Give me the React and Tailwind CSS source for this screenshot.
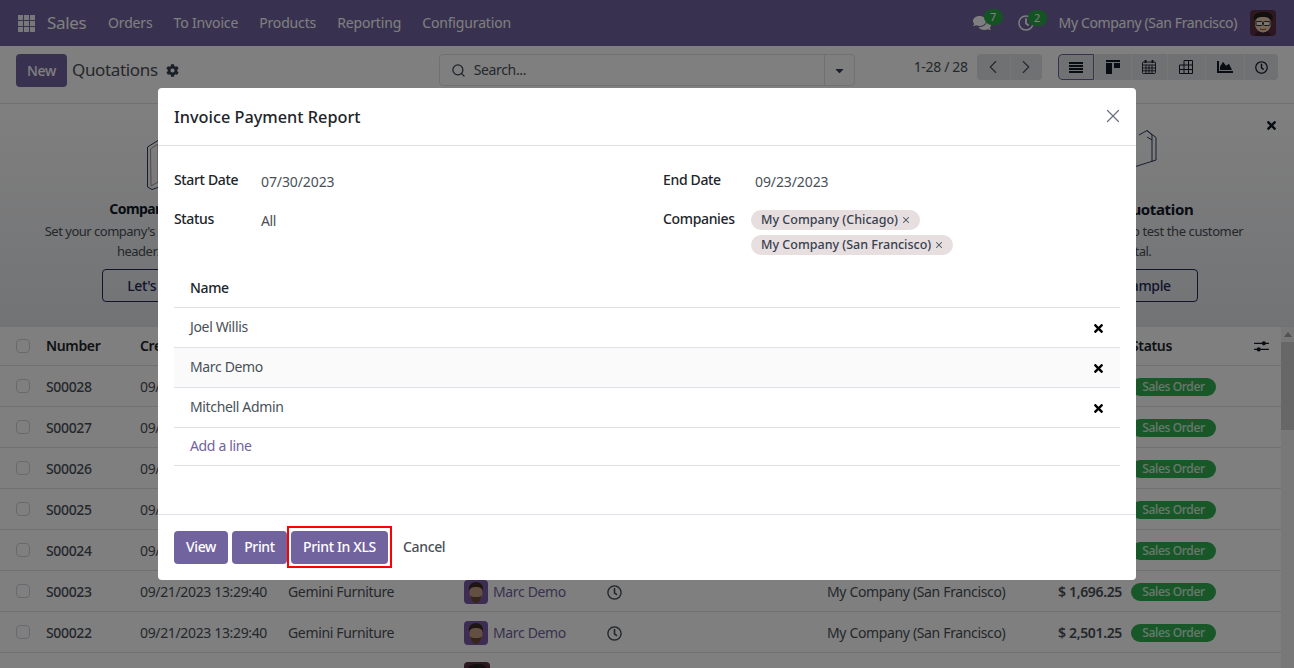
import { ChevronLeft, ChevronRight, Search, X } from 'lucide-react';
import { FaCaretDown, FaChartArea, FaCog, FaComments, FaRegClock, FaTimes } from 'react-icons/fa';

const menus = ['Orders', 'To Invoice', 'Products', 'Reporting', 'Configuration'];

const orders = [
  { id: 'S00028', date: '09/', customer: '', person: '' },
  { id: 'S00027', date: '09/', customer: '', person: '' },
  { id: 'S00026', date: '09/', customer: '', person: '' },
  { id: 'S00025', date: '09/', customer: '', person: '' },
  { id: 'S00024', date: '09/', customer: '', person: '' },
  { id: 'S00023', date: '09/21/2023 13:29:40', customer: 'Gemini Furniture', person: 'Marc Demo', company: 'My Company (San Francisco)', total: '$ 1,696.25' },
  { id: 'S00022', date: '09/21/2023 13:29:40', customer: 'Gemini Furniture', person: 'Marc Demo', company: 'My Company (San Francisco)', total: '$ 2,501.25' },
];

const lines = ['Joel Willis', 'Marc Demo', 'Mitchell Admin'];

const MarcAvatar = () => (
  <svg viewBox="0 0 24 24" className="w-6 h-6 rounded">
    <rect width="24" height="24" fill="#7a5aa6" />
    <ellipse cx="12" cy="13" rx="6.5" ry="9" fill="#c9a184" />
    <path d="M5 11c-1-6 3-9 7-9s8 3 7 9c-1-3-3-4-7-4s-6 1-7 4z" fill="#3a2a22" />
    <path d="M6 15c1 6 4 8 6 8s5-2 6-8c-1 2-3 2-6 2s-5 0-6-2z" fill="#6b4a38" />
  </svg>
);

const MitchellAvatar = () => (
  <svg viewBox="0 0 26 26" className="w-[26px] h-[26px] rounded">
    <rect width="26" height="26" fill="#5a2f42" />
    <path d="M5 26c0-4 4-5 8-5s8 1 8 5z" fill="#3a2030" />
    <ellipse cx="13" cy="14" rx="8" ry="8.500" fill="#efcfae" />
    <path d="M4 11C2 4 8 2 13 2s12 1 9 9c-2-3-4-4-9-4s-7 1-9 4z" fill="#23201f" />
    <rect x="6" y="11.500" width="6.500" height="4" rx="1" fill="#f5efe6" stroke="#333" />
    <rect x="13.500" y="11.500" width="6.500" height="4" rx="1" fill="#f5efe6" stroke="#333" />
    <path d="M10 19q3 1.500 6 0" fill="none" stroke="#8a4a3a" />
  </svg>
);

const ViewButton = ({ children, active, width }) => (
  <div className={`h-[26px] flex items-center justify-center bg-[#dfe2e5] ${width} ${active ? 'border border-[#71639e] rounded-l' : 'border-l border-[#eceef0]'}`}>
    {children}
  </div>
);

const Tag = ({ label }) => (
  <span className="inline-flex items-center h-5 pl-[10px] pr-[9px] rounded-full bg-[#e7dfdf] text-[12.5px] font-medium tracking-normal text-[#374151] w-fit">
    {label}
    <X size={10} strokeWidth={2.5} className="ml-[3px] text-[#4b5563]" />
  </span>
);

const Checkbox = () => (
  <span className="ml-4 w-[14px] h-[14px] border border-[#ced4da] rounded-sm" />
);

export default function App() {
  return (
    <div className="relative h-screen overflow-hidden bg-white text-sm tracking-[-0.35px] text-[#495057] font-['Noto_Sans',sans-serif]">
      {/* Navbar */}
      <div className="h-[46px] bg-[#71639e] flex items-center text-white">
        <div className="grid grid-cols-3 gap-[1px] ml-[18px] w-[17px]">
          {Array.from({ length: 9 }).map((_, i) => (
            <span key={i} className="h-[5px] bg-white/90" />
          ))}
        </div>
        <span className="ml-3 text-[17px] w-[61px]">Sales</span>
        <div className="flex tracking-[-0.15px]">
          {menus.map((m) => (
            <span key={m} className="mr-[21px]">{m}</span>
          ))}
        </div>
        <div className="ml-auto flex items-center">
          <div className="relative mr-[27px]">
            <FaComments size={18} />
            <span className="absolute -top-[5px] left-[11px] w-[19px] h-4 rounded-full bg-[#28a745] text-[11px] leading-4 text-center">7</span>
          </div>
          <div className="relative mr-[25px]">
            <FaRegClock size={16} />
            <span className="absolute -top-[5px] left-[10px] w-[19px] h-4 rounded-full bg-[#28a745] text-[11px] leading-4 text-center">2</span>
          </div>
          <span className="mr-[13px]">My Company (San Francisco)</span>
          <div className="mr-[18px] flex"><MitchellAvatar /></div>
        </div>
      </div>

      {/* Control panel */}
      <div className="h-[58px] border-b border-[#dee2e6] flex items-start pt-2 pl-4">
        <button className="h-[33px] w-[51px] rounded bg-[#71639e] text-white font-medium">New</button>
        <span className="ml-[5px] mt-[3px] text-[17px] leading-[26px]">Quotations</span>
        <FaCog size={13} className="ml-2 mt-[10px] text-[#374151]" />
        <div className="ml-[260px] w-[416px] h-8 border border-[#dee2e6] rounded flex items-center">
          <Search size={15} className="ml-[11px] text-[#374151]" />
          <span className="ml-[8px] flex-1">Search...</span>
          <div className="w-[30px] h-full border-l border-[#dee2e6] flex items-center justify-center">
            <FaCaretDown size={13} className="text-[#374151]" />
          </div>
        </div>
        <span className="ml-[59px] mt-[3px] w-[63px] whitespace-nowrap">1-28 / 28</span>
        <div className="flex rounded overflow-hidden">
          <div className="w-[33px] h-[26px] bg-[#dfe2e5] flex items-center justify-center"><ChevronLeft size={22} strokeWidth={1.2} /></div>
          <div className="w-[32px] h-[26px] bg-[#dfe2e5] border-l border-[#eceef0] flex items-center justify-center"><ChevronRight size={22} strokeWidth={1.2} /></div>
        </div>
        <div className="ml-4 flex rounded overflow-hidden text-[#111827]">
          <ViewButton active width="w-9">
            <span className="flex flex-col gap-[1px] w-[14px]">
              <i className="h-[2px] bg-[#111827]" /><i className="h-[2px] bg-[#111827]" /><i className="h-[2px] bg-[#111827]" /><i className="h-[2px] bg-[#111827]" />
            </span>
          </ViewButton>
          <ViewButton width="w-[37px]">
            <svg viewBox="0 0 14 14" className="w-[14px] h-[14px]" fill="#111827"><path d="M0 0h14v2H0zM0 3h6v11H0zM8 3h6v5H8z" /></svg>
          </ViewButton>
          <ViewButton width="w-9">
            <svg viewBox="0 0 14 14" className="w-[14px] h-[14px]" fill="none" stroke="#111827" strokeWidth="0.9">
              <rect x="0.500" y="2" width="13" height="11.500" rx="1" />
              <path d="M0.500 5h13M0.500 8h13M0.500 10.800h13M4 5v8.500M7 5v8.500M10 5v8.500" />
              <path d="M3.500 0v3M10.500 0v3" strokeWidth="1.800" />
            </svg>
          </ViewButton>
          <ViewButton width="w-[38px]">
            <svg viewBox="0 0 14 14" className="w-[14px] h-[14px]" fill="none" stroke="#111827"><path d="M5 .5h8.500v13H.5V5h13M5 .5v13M9.500.5v13M.5 9.500h13" /></svg>
          </ViewButton>
          <ViewButton width="w-[39px]"><FaChartArea size={16} /></ViewButton>
          <ViewButton width="w-[34px]"><FaRegClock size={13} /></ViewButton>
        </div>
      </div>

      {/* Onboarding banner */}
      <div className="relative h-[223px] bg-gradient-to-b from-white to-[#e5e7eb] border-b border-[#dee2e6] flex justify-between px-[17px] pt-[25px]">
        <div className="w-[280px] flex flex-col items-center text-center">
          <div className="h-[70px] pt-[11px] ml-[40px]">
            <svg viewBox="0 0 60 50" className="w-[60px] h-[50px]" fill="none">
              <path d="M11 .5.5 7v40L5 49.500 60 30" stroke="#2f3a63" />
              <path d="M3.500 9 11 4v38l-7 4z" stroke="#a58f98" />
            </svg>
          </div>
          <div className="font-bold leading-5 tracking-[-0.6px] text-[#111827]">Company Data</div>
          <div className="mt-[2px] text-[13px] leading-5 tracking-[-0.5px] whitespace-nowrap">Set your company's data for documents</div>
          <div className="text-[13px] leading-5 tracking-[-0.5px]">header/footer.</div>
          <button className="mt-2 ml-[5px] pr-1 w-[115px] h-[33px] border border-[#1f2a5a] rounded text-[#1f2a5a] font-medium">Let's do it</button>
        </div>
        <div className="w-[280px] flex flex-col items-center text-center">
          <div className="h-[70px] pt-[1px]">
            <svg viewBox="0 0 40 48" className="w-10 h-12" fill="none" stroke="#2f3a63">
              <path d="M0 38h14l25-8V7.500L30 .5 22 5" />
              <path d="M30 .5 35 5v27M30 7l5 3" />
            </svg>
          </div>
          <div className="mr-[17px] text-[15px] font-bold leading-5 text-[#111827]">Sample Quotation</div>
          <div className="mt-[2px] mr-[4px] text-[13px] leading-5 tracking-[-0.4px] whitespace-nowrap">Send a quotation to test the customer</div>
          <div className="mr-[8px] text-[13px] leading-5 tracking-[-0.5px]">portal.</div>
          <button className="mt-2 mr-[14px] w-[135px] h-[33px] border border-[#1f2a5a] rounded text-[#1f2a5a] font-medium">Send sample</button>
        </div>
        <FaTimes size={13} className="absolute top-[15px] right-4 text-[#111827]" />
      </div>

      {/* List */}
      <div className="flex">
        <div className="w-[1281px]">
          <div className="h-[39px] border-b border-[#dee2e6] grid grid-cols-[46px_94px_148px_176px_143px_220px_180px_124px_150px] items-center font-semibold text-[#212529]">
            <Checkbox />
            <span>Number</span>
            <span>Creation Date</span>
            <span />
            <span />
            <span />
            <span />
            <span />
            <div className="flex items-center justify-between pr-[12px]">
              <span>Status</span>
              <svg viewBox="0 0 16 14" className="w-[15px] h-[13px]" fill="#111827"><path d="M0 3h16v1.300H0zM0 9.500h16v1.300H0z" /><circle cx="10.500" cy="3.600" r="2.200" /><circle cx="5" cy="10.100" r="2.200" /></svg>
            </div>
          </div>
          {orders.map((o) => (
            <div key={o.id} className="h-[41px] pt-[2px] border-b border-[#dee2e6] grid grid-cols-[46px_94px_148px_176px_143px_220px_180px_124px_150px] items-center whitespace-nowrap">
              <span className="-mt-[2px] ml-4 w-[14px] h-[14px] border border-[#ced4da] rounded-sm" />
              <span className="font-medium">{o.id}</span>
              <span>{o.date}</span>
              <span>{o.customer}</span>
              <span className="-mt-[1px] flex items-center gap-[5px] text-[#71639e]">
                {o.person && <MarcAvatar />}
                {o.person}
              </span>
              <span>{o.person && <FaRegClock size={15} />}</span>
              <span>{o.company}</span>
              <span className="text-right pr-[9px] font-semibold col-start-8">{o.total}</span>
              <span className="w-[85px] h-[18px] rounded-full bg-[#30b050] text-white/80 text-xs font-medium leading-[18px] text-center">Sales Order</span>
            </div>
          ))}
          <div className="h-[41px] grid grid-cols-[46px_94px_148px_176px_143px] items-center pt-[2px] whitespace-nowrap">
            <Checkbox />
            <span className="font-medium">S00021</span>
            <span>09/21/2023 13:29:40</span>
            <span>Gemini Furniture</span>
            <span className="flex items-center gap-[5px] text-[#71639e]"><MitchellAvatar />Mitchell Admin</span>
          </div>
        </div>
        <div className="w-[13px] h-[341px] bg-[#f1f1f1] flex flex-col items-center pt-[5px]">
          <span className="w-0 h-0 border-x-[4px] border-x-transparent border-b-[5px] border-b-[#a3a3a3]" />
          <span className="mt-[5px] w-full h-[88px] bg-[#cfcfcf]" />
        </div>
      </div>

      {/* Dialog */}
      <div className="absolute inset-0 bg-black/50 flex justify-center items-start pt-[88px]">
        <div className="w-[978px] h-[492px] bg-white rounded-sm flex flex-col">
          <div className="h-[58px] shrink-0 border-b border-[#dee2e6] px-4 flex items-center justify-between">
            <h4 className="pt-[2px] text-[16.3px] font-medium tracking-normal text-[#212529]">Invoice Payment Report</h4>
            <X size={22} strokeWidth={1.3} className="text-[#6b7280] mr-[-4px] -mt-[1px]" />
          </div>

          <div className="flex-1 px-4 pt-6">
            <div className="grid grid-cols-[489px_1fr]">
              <div className="grid grid-cols-[87px_1fr] grid-rows-[39px_auto]">
                <span className="font-medium text-[#212529]">Start Date</span>
                <span className="pt-[2px] tracking-[-0.1px]">07/30/2023</span>
                <span className="font-medium text-[#212529]">Status</span>
                <span className="pt-[2px]">All</span>
              </div>
              <div className="grid grid-cols-[88px_1fr] grid-rows-[39px_auto]">
                <span className="font-medium text-[#212529]">End Date</span>
                <span className="pt-[2px] pl-1 tracking-[-0.1px]">09/23/2023</span>
                <span className="font-medium text-[#212529]">Companies</span>
                <div className="flex flex-col gap-[5px] pt-[1px]">
                  <Tag label="My Company (Chicago)" />
                  <Tag label="My Company (San Francisco)" />
                </div>
              </div>
            </div>

            <div className="mt-[15px] w-[946px]">
              <div className="h-[38px] pb-[1px] border-b border-[#dee2e6] pl-4 flex items-center font-medium text-[#212529]">Name</div>
              {lines.map((name, i) => (
                <div key={name} className={`h-10 border-b border-[#dee2e6] pl-4 pr-4 flex items-center justify-between ${i === 1 ? 'bg-[#fafafa]' : ''}`}>
                  <span className="-mt-[1px]">{name}</span>
                  <FaTimes size={13} className="text-black mt-[2px] -mr-[1px]" />
                </div>
              ))}
              <div className="h-[38px] pb-[1px] border-b border-[#dee2e6] pl-4 flex items-center text-[#71639e]">Add a line</div>
            </div>
          </div>

          <div className="h-[66px] shrink-0 border-t border-[#dee2e6] px-4 flex items-center">
            <button className="h-[33px] w-[54px] pb-[2px] rounded bg-[#71639e] text-white font-medium">View</button>
            <button className="ml-1 h-[33px] w-[55px] pb-[2px] rounded bg-[#71639e] text-white font-medium">Print</button>
            <div className="relative ml-1 flex">
              <button className="h-[33px] w-[97px] pb-[2px] rounded bg-[#71639e] text-white font-medium">Print In XLS</button>
              <span className="absolute -inset-x-[4px] -top-[5px] -bottom-1 border-2 border-[#ff0000]" />
            </div>
            <button className="ml-[15px] pb-[2px] font-medium">Cancel</button>
          </div>
        </div>
      </div>
    </div>
  );
}
